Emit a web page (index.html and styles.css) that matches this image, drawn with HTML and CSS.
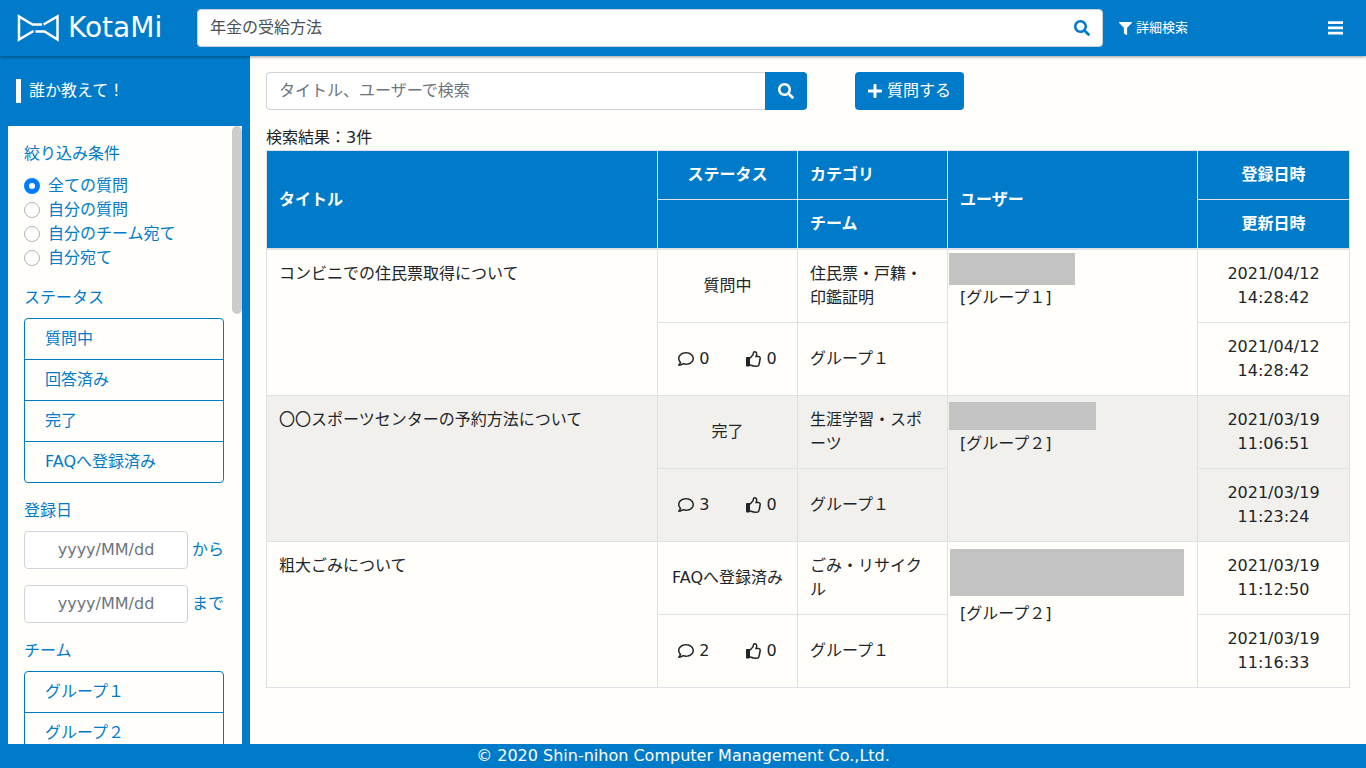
FILE: index.html
```html
<!DOCTYPE html>
<html lang="ja">
<head>
<meta charset="utf-8">
<title>KotaMi</title>
<meta name="viewport" content="width=device-width, initial-scale=1">
<link rel="stylesheet" href="styles.css">
</head>
<body>
<svg class="sprite" aria-hidden="true">
  <symbol id="i-search" viewBox="0 0 512 512"><path d="M505 442.7L405.3 343c-4.500-4.500-10.600-7-17-7H372c27.600-35.300 44-79.700 44-128C416 93.100 322.900 0 208 0S0 93.100 0 208s93.100 208 208 208c48.300 0 92.700-16.400 128-44v16.300c0 6.400 2.500 12.500 7 17l99.700 99.700c9.400 9.400 24.600 9.400 33.900 0l28.300-28.300c9.400-9.400 9.400-24.600.1-34zM208 336c-70.700 0-128-57.200-128-128 0-70.700 57.200-128 128-128 70.700 0 128 57.200 128 128 0 70.700-57.200 128-128 128z"/></symbol>
  <symbol id="i-filter" viewBox="0 0 512 512"><path d="M487.976 0H24.028C2.710 0-8.047 25.866 7.058 40.971L192 225.941V432c0 7.831 3.821 15.170 10.237 19.662l80 55.980C298.020 518.690 320 507.493 320 487.980V225.941l184.947-184.970C520.021 25.896 509.338 0 487.976 0z"/></symbol>
  <symbol id="i-plus" viewBox="0 0 448 512"><path d="M416 208H272V64c0-17.670-14.330-32-32-32h-32c-17.670 0-32 14.330-32 32v144H32c-17.670 0-32 14.330-32 32v32c0 17.670 14.330 32 32 32h144v144c0 17.670 14.330 32 32 32h32c17.670 0 32-14.330 32-32V304h144c17.670 0 32-14.330 32-32v-32c0-17.670-14.330-32-32-32z"/></symbol>
  <symbol id="i-comment" viewBox="0 0 512 512"><path d="M256 32C114.600 32 0 125.100 0 240c0 47.600 19.900 91.200 52.900 126.300C38 405.700 7 439.100 6.500 439.500c-6.600 7-8.400 17.200-4.600 26S14.400 480 24 480c61.500 0 110-25.700 139.100-46.300C192 442.800 223.200 448 256 448c141.400 0 256-93.100 256-208S397.400 32 256 32zm0 368c-26.700 0-53.100-4.100-78.400-12.100l-22.700-7.200-19.500 13.800c-14.300 10.100-33.900 21.400-57.500 29 7.300-12.100 14.400-25.700 19.900-40.200l10.600-28.100-20.600-21.800C69.700 314.100 48 282.200 48 240c0-88.200 93.300-160 208-160s208 71.800 208 160-93.300 160-208 160z"/></symbol>
  <symbol id="i-thumb" viewBox="0 0 512 512"><path d="M466.270 286.690C475.040 271.840 480 256 480 236.850c0-44.015-37.218-85.580-85.820-85.580H357.700c4.920-12.810 8.850-28.130 8.850-46.540C366.550 31.936 328.860 0 271.280 0c-61.607 0-58.093 94.933-71.760 108.600-22.747 22.747-49.615 66.447-68.760 83.400H32c-17.673 0-32 14.327-32 32v240c0 17.673 14.327 32 32 32h64c14.893 0 27.408-10.174 30.978-23.950 44.509 1.001 75.060 39.940 177.802 39.940 7.220 0 15.220.01 22.220.01 77.117 0 111.986-39.423 112.940-95.330 13.319-18.425 20.299-43.122 17.340-66.990 9.854-18.452 13.664-40.343 8.990-62.990zm-61.750 53.830c12.560 21.130 1.260 49.410-13.940 57.570 7.700 48.780-17.608 65.900-53.120 65.900h-37.820c-71.639 0-118.029-37.820-171.640-37.820V240h10.920c28.360 0 67.980-70.890 94.540-97.460 28.360-28.360 18.910-75.630 37.820-94.540 47.270 0 47.270 32.980 47.270 56.730 0 39.170-28.360 56.720-28.360 94.540h103.990c21.110 0 37.730 18.910 37.820 37.820.09 18.900-12.820 37.810-22.270 37.810 13.489 14.555 16.371 45.236-5.210 65.620z"/></symbol>
</svg>

<header class="topbar">
  <a class="brand" href="#" aria-label="KotaMi">
    <svg class="brand-mark" viewBox="0 0 44 28" aria-hidden="true"><path d="M26 10.500H16.500L3 2.500v23L17.500 17M27.500 10.500L41.500 2.500v23L28.500 17.500H19.500"/></svg>
    <span class="brand-name">KotaMi</span>
  </a>
  <form class="site-search" role="search">
    <input class="site-search-input" type="text" aria-label="サイト内検索" value="年金の受給方法">
    <button class="site-search-button" type="button" aria-label="検索"><svg class="icon"><use href="#i-search"/></svg></button>
  </form>
  <div class="topbar-tools">
    <a class="filter-link" href="#"><svg class="icon icon-sm"><use href="#i-filter"/></svg>詳細検索</a>
    <button class="menu-button" type="button" aria-label="メニュー"><svg class="menu-icon" viewBox="0 0 15 14"><path d="M0 .3h15v2.700H0zM0 5.500h15v2.700H0zM0 10.800h15v2.700H0z"/></svg></button>
  </div>
</header>

<div class="layout">
  <aside class="sidebar">
    <h1 class="sidebar-title">誰か教えて！</h1>
    <div class="panel">
      <form class="filters">
        <fieldset class="filter-group">
          <legend class="filter-heading">絞り込み条件</legend>
          <label class="radio"><input type="radio" name="scope" checked>全ての質問</label>
          <label class="radio"><input type="radio" name="scope">自分の質問</label>
          <label class="radio"><input type="radio" name="scope">自分のチーム宛て</label>
          <label class="radio"><input type="radio" name="scope">自分宛て</label>
        </fieldset>
        <section class="filter-group">
          <h2 class="filter-heading">ステータス</h2>
          <div class="option-list">
            <button class="option" type="button">質問中</button>
            <button class="option" type="button">回答済み</button>
            <button class="option" type="button">完了</button>
            <button class="option" type="button">FAQへ登録済み</button>
          </div>
        </section>
        <section class="filter-group">
          <h2 class="filter-heading">登録日</h2>
          <div class="date-rows">
            <label class="date-row"><input class="control date-input" type="text" placeholder="yyyy/MM/dd">から</label>
            <label class="date-row"><input class="control date-input" type="text" placeholder="yyyy/MM/dd">まで</label>
          </div>
        </section>
        <section class="filter-group">
          <h2 class="filter-heading">チーム</h2>
          <div class="option-list">
            <button class="option" type="button">グループ１</button>
            <button class="option" type="button">グループ２</button>
          </div>
        </section>
      </form>
      <div class="scroll-track" aria-hidden="true"><div class="scroll-thumb"></div></div>
    </div>
  </aside>

  <main class="content">
    <div class="toolbar">
      <form class="question-search">
        <input class="control question-input" type="text" aria-label="質問を検索" placeholder="タイトル、ユーザーで検索">
        <button class="button question-submit" type="button" aria-label="検索"><svg class="icon"><use href="#i-search"/></svg></button>
      </form>
      <button class="button" type="button"><svg class="icon icon-plus"><use href="#i-plus"/></svg>質問する</button>
    </div>
    <p class="result-count">検索結果：3件</p>
    <table class="questions">
      <colgroup><col><col class="col-status"><col class="col-category"><col class="col-user"><col class="col-date"></colgroup>
      <thead>
        <tr><th rowspan="2">タイトル</th><th class="center">ステータス</th><th>カテゴリ</th><th rowspan="2">ユーザー</th><th class="center">登録日時</th></tr>
        <tr><th></th><th>チーム</th><th class="center">更新日時</th></tr>
      </thead>
      <tbody>
        <tr>
          <td rowspan="2">コンビニでの住民票取得について</td>
          <td class="center middle">質問中</td>
          <td>住民票・戸籍・印鑑証明</td>
          <td rowspan="2"><div class="masked masked-short"></div>[グループ１]</td>
          <td class="center">2021/04/12 14:28:42</td>
        </tr>
        <tr>
          <td class="middle"><div class="counts"><span class="count"><svg class="icon"><use href="#i-comment"/></svg>0</span><span class="count"><svg class="icon"><use href="#i-thumb"/></svg>0</span></div></td>
          <td class="middle">グループ１</td>
          <td class="center">2021/04/12 14:28:42</td>
        </tr>
      </tbody>
      <tbody class="striped">
        <tr>
          <td rowspan="2">〇〇スポーツセンターの予約方法について</td>
          <td class="center middle">完了</td>
          <td>生涯学習・スポーツ</td>
          <td rowspan="2"><div class="masked masked-medium"></div>[グループ２]</td>
          <td class="center">2021/03/19 11:06:51</td>
        </tr>
        <tr>
          <td class="middle"><div class="counts"><span class="count"><svg class="icon"><use href="#i-comment"/></svg>3</span><span class="count"><svg class="icon"><use href="#i-thumb"/></svg>0</span></div></td>
          <td class="middle">グループ１</td>
          <td class="center">2021/03/19 11:23:24</td>
        </tr>
      </tbody>
      <tbody>
        <tr>
          <td rowspan="2">粗大ごみについて</td>
          <td class="center middle">FAQへ登録済み</td>
          <td>ごみ・リサイクル</td>
          <td rowspan="2"><div class="masked masked-long"></div>[グループ２]</td>
          <td class="center">2021/03/19 11:12:50</td>
        </tr>
        <tr>
          <td class="middle"><div class="counts"><span class="count"><svg class="icon"><use href="#i-comment"/></svg>2</span><span class="count"><svg class="icon"><use href="#i-thumb"/></svg>0</span></div></td>
          <td class="middle">グループ１</td>
          <td class="center">2021/03/19 11:16:33</td>
        </tr>
      </tbody>
    </table>
  </main>
</div>

<footer class="footer">© 2020 Shin-nihon Computer Management Co.,Ltd.</footer>
</body>
</html>
```

FILE: styles.css
```css
:root {
  --blue: #007bca;
  --paper: #fffefa;
  --line: #dee2e6;
  --field-line: #ced4da;
}

*, *::before, *::after { box-sizing: border-box; }

body {
  display: flex;
  flex-direction: column;
  height: 100vh;
  margin: 0;
  overflow: hidden;
  background: var(--paper);
  color: #212529;
  font: 16px/24px "DejaVu Sans", "Noto Sans CJK JP", sans-serif;
}

button, input { margin: 0; font: inherit; color: inherit; }
button { padding: 0; border: 0; background: none; cursor: pointer; }
a { color: inherit; text-decoration: none; }
h1, h2, p { margin: 0; font-size: 16px; font-weight: 400; }

.sprite { display: none; }
.icon { flex: none; width: 16px; height: 16px; fill: currentColor; }
.icon-sm { width: 13px; height: 13px; }
.icon-plus { width: 14px; }

/* Top bar */
.topbar {
  position: relative;
  z-index: 1;
  display: flex;
  flex: none;
  align-items: center;
  gap: 16px;
  height: 56px;
  padding: 0 23px 0 16px;
  background: var(--blue);
  color: #fff;
  box-shadow: 0 1px 3px rgba(0, 0, 0, .4);
}
.brand { display: flex; flex: none; align-items: center; gap: 8px; width: 165px; }
.brand-mark { width: 44px; height: 28px; fill: none; stroke: #fff; stroke-width: 2.5; }
.brand-name { font-size: 28px; line-height: 32px; }
.site-search {
  display: flex;
  flex: 1;
  height: 38px;
  border: 1px solid var(--field-line);
  border-radius: 4px;
  background: #fff;
}
.site-search-input {
  flex: 1;
  min-width: 0;
  padding: 0 12px;
  border: 0;
  background: none;
  color: #495057;
}
.site-search-button { display: grid; place-items: center; width: 40px; color: var(--blue); }
.topbar-tools { display: flex; flex: none; align-items: center; justify-content: space-between; width: 224px; }
.filter-link { display: flex; align-items: center; gap: 4px; font-size: 13px; }
.menu-button { display: flex; }
.menu-icon { width: 15px; height: 14px; fill: #fff; }

/* Sidebar */
.layout { display: flex; flex: 1; min-height: 0; }
.sidebar {
  display: flex;
  flex: none;
  flex-direction: column;
  width: 250px;
  padding: 23px 8px 0;
  background: var(--blue);
}
.sidebar-title {
  margin: 0 8px 23px;
  padding-left: 8px;
  border-left: 5px solid #fff;
  color: #fff;
}
.panel { display: flex; flex: 1; min-height: 0; background: var(--paper); color: var(--blue); }
.filters {
  display: flex;
  flex: 1;
  flex-direction: column;
  gap: 16px;
  min-width: 0;
  padding: 16px 8px 0 16px;
  overflow-y: auto;
  scrollbar-width: none;
}
.filter-group { flex: none; min-width: 0; margin: 0; padding: 0; border: 0; }
.filter-heading { margin-bottom: 8px; padding: 0; }
.scroll-track { flex: none; width: 10px; }
.scroll-thumb { height: 188px; border-radius: 5px; background: #ccc; }

.radio { display: flex; align-items: center; gap: 8px; }
.radio input {
  width: 16px;
  height: 16px;
  border: 1px solid #adb5bd;
  border-radius: 50%;
  background: #fff;
  appearance: none;
}
.radio input:checked { border: 5px solid #007bff; }

.option-list {
  display: flex;
  flex-direction: column;
  border: 1px solid var(--blue);
  border-radius: 4px;
}
.option { height: 40px; padding: 0 20px; text-align: left; }
.option + .option { height: 41px; border-top: 1px solid var(--blue); }

.control {
  height: 38px;
  padding: 0 12px 2px;
  border: 1px solid var(--field-line);
  border-radius: 4px;
  background: #fff;
  color: #495057;
}
.control::placeholder { color: #6c757d; opacity: 1; }
.date-rows { display: grid; grid-template-columns: minmax(0, 1fr); gap: 16px; }
.date-row { display: flex; align-items: center; gap: 4px; white-space: nowrap; }
.date-input { flex: 1; min-width: 0; text-align: center; }

/* Main column */
.content { flex: 1; min-width: 0; padding: 16px; overflow-y: auto; scrollbar-width: none; }
.toolbar { display: flex; gap: 48px; margin-bottom: 16px; }
.question-search { display: flex; width: calc(50% - 1px); }
.question-input { flex: 1; min-width: 0; border-right: 0; border-radius: 4px 0 0 4px; }
.button {
  display: flex;
  align-items: center;
  gap: 5px;
  height: 38px;
  padding: 0 13px;
  border-radius: 4px;
  background: var(--blue);
  color: #fff;
}
.question-submit { border-radius: 0 4px 4px 0; }

.questions { width: 100%; border-collapse: collapse; table-layout: fixed; }
.col-status { width: 140px; }
.col-category { width: 150px; }
.col-user { width: 250px; }
.col-date { width: 152px; }
.questions th, .questions td {
  padding: 12px;
  border: 1px solid var(--line);
  text-align: left;
  vertical-align: top;
  line-break: anywhere;
}
.questions th { background: var(--blue); color: #fff; font-weight: 700; vertical-align: middle; }
.questions thead { border-bottom: 2px solid var(--line); }
.questions .center { padding: 12px 24px; text-align: center; }
.questions .center.middle { padding: 12px; }
.questions thead .center { padding: 12px; }
.questions .middle { vertical-align: middle; }
.striped { background: #f1f0ed; }
.counts { display: flex; justify-content: center; gap: 36px; }
.count { display: flex; align-items: center; gap: 5px; }

.masked { background: #c3c3c3; }
.masked-short { width: 126px; height: 32px; margin: -9px 0 1px -11px; }
.masked-medium { width: 147px; height: 28px; margin: -6px 0 2px -11px; }
.masked-long { width: 234px; height: 47px; margin: -5px 0 6px -10px; }

.footer { flex: none; background: var(--blue); color: #fff; text-align: center; }
```
